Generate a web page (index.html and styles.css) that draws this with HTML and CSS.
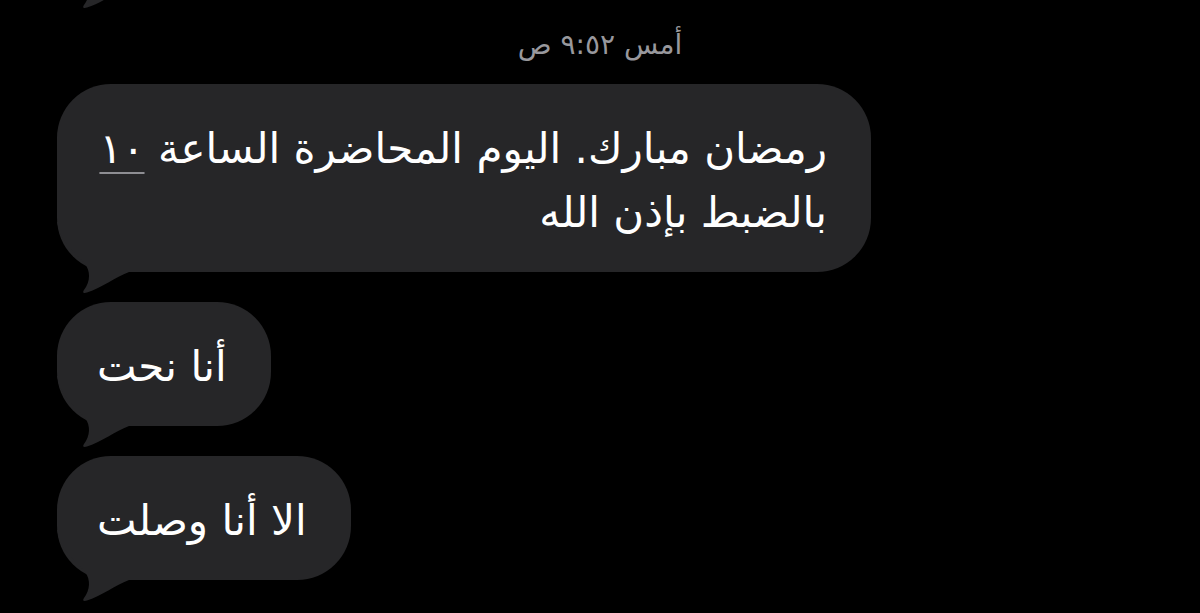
FILE: index.html
```html
<!doctype html>
<html lang="ar">
<head>
    <meta charset="UTF-8">
    <title>الرسائل</title>
    <link rel="stylesheet" href="styles.css">
</head>
<body>
<svg class="defs" width="0" height="0">
    <symbol id="tail" viewBox="0 0 80 74">
        <path d="M0 0 L1 4 C4 20 20 32 28 42 C34 50 33 60 27 68 C25 71 27 71.5 30 70.5 C45 66 58 55 72 50 L80 50 L80 0 Z"/>
    </symbol>
</svg>
<div class="thread">
    <div class="bubble earlier">
        <svg class="tail"><use href="#tail"/></svg>
    </div>

    <p class="stamp" dir="rtl"><span class="day">أمس</span> ٩:٥٢ ص</p>

    <div class="bubble" dir="rtl">
        <svg class="tail"><use href="#tail"/></svg>
        <p>رمضان مبارك. اليوم المحاضرة الساعة <span class="link">١٠</span> بالضبط بإذن الله</p>
    </div>
    <div class="bubble" dir="rtl">
        <svg class="tail"><use href="#tail"/></svg>
        <p>أنا نحت</p>
    </div>
    <div class="bubble" dir="rtl">
        <svg class="tail"><use href="#tail"/></svg>
        <p>الا أنا وصلت</p>
    </div>
</div>
</body>
</html>
```

FILE: styles.css
```css
* {
    margin: 0;
    padding: 0;
    box-sizing: border-box;
}

html, body {
    background: #000;
}

body {
    height: 613px;
    overflow: hidden;
    font-family: "DejaVu Sans", "Noto Sans Arabic", sans-serif;
    color: #fff;
}

.defs {
    position: absolute;
}

.thread {
    display: flex;
    flex-direction: column;
    align-items: flex-start;
}

.stamp {
    align-self: stretch;
    margin: 41px 0 22px;
    text-align: center;
    font-size: 28px;
    line-height: 34px;
    color: #98989d;
}

.bubble {
    position: relative;
    max-width: 814px;
    margin-left: 57px;
    padding: 33px 44px 27px 40px;
    border-radius: 54px;
    background: #262628;
    font-size: 42px;
    line-height: 64px;
}

.bubble + .bubble {
    margin-top: 30px;
}

.bubble p {
    position: relative;
}

/* the message above, only its tail is still on screen */
.earlier {
    width: 400px;
    height: 120px;
    margin-top: -133px;
}

.tail {
    position: absolute;
    left: 0;
    bottom: -24px;
    width: 80px;
    height: 74px;
    fill: #262628;
}

.link {
    text-decoration: underline;
    text-decoration-color: #8e8e93;
    text-decoration-thickness: 2px;
    text-underline-offset: 9px;
}
```
